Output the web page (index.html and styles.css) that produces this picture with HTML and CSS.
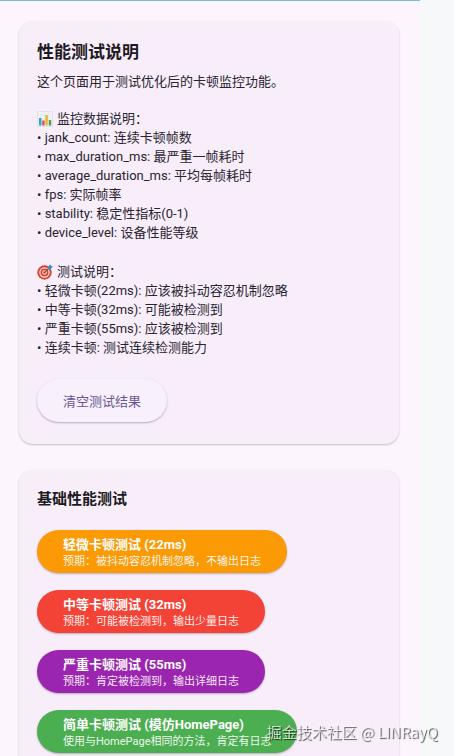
FILE: index.html
```html
<!DOCTYPE html>
<html lang="zh-CN">
<head>
    <meta charset="UTF-8">
    <meta name="viewport" content="width=device-width, initial-scale=1.0">
    <title>性能测试</title>
    <link rel="stylesheet" href="styles.css">
</head>
<body>
    <main class="screen">
        <section class="card">
            <h1 class="card-title">性能测试说明</h1>
            <p class="intro">这个页面用于测试优化后的卡顿监控功能。</p>

            <h2 class="list-title">
                <svg class="icon" viewBox="0 0 16 16" aria-hidden="true">
                    <rect x="0.5" y="0.5" width="15" height="15" fill="#f1f2f3" stroke="#dfe4e8"/>
                    <path d="M1 4.5h14M1 8h14M1 11.5h14M4.5 1v14M8 1v14M11.5 1v14" stroke="#e2e8ec" stroke-width="0.6"/>
                    <rect x="2" y="7" width="2.4" height="7.5" fill="#3c9bd0"/>
                    <rect x="5.2" y="9.5" width="2.4" height="5" fill="#d9534a"/>
                    <rect x="8.4" y="4" width="2.4" height="10.5" fill="#e9b23a"/>
                    <rect x="11.8" y="9" width="2.4" height="5.5" fill="#5a9c48"/>
                </svg>
                监控数据说明：
            </h2>
            <ul class="list">
                <li>jank_count: 连续卡顿帧数</li>
                <li>max_duration_ms: 最严重一帧耗时</li>
                <li>average_duration_ms: 平均每帧耗时</li>
                <li>fps: 实际帧率</li>
                <li>stability: 稳定性指标(0-1)</li>
                <li>device_level: 设备性能等级</li>
            </ul>

            <h2 class="list-title">
                <svg class="icon" viewBox="0 0 16 16" aria-hidden="true">
                    <circle cx="7.5" cy="8.5" r="7.2" fill="#d8432f"/>
                    <circle cx="7.5" cy="8.5" r="5.2" fill="#f3e9e8"/>
                    <circle cx="7.5" cy="8.5" r="4" fill="#d8432f"/>
                    <circle cx="7.5" cy="8.5" r="2.3" fill="#f3e9e8"/>
                    <circle cx="7.5" cy="8.5" r="1.3" fill="#d8432f"/>
                    <path d="M7.5 8.5L12.5 3.5" stroke="#6b4a4a" stroke-width="1"/>
                    <path d="M10.6 3.2l2.7-3 .8 1.8 1.9.6-2.7 2.9-2.6-.1z" fill="#3c8fb5"/>
                </svg>
                测试说明：
            </h2>
            <ul class="list">
                <li>轻微卡顿(22ms): 应该被抖动容忍机制忽略</li>
                <li>中等卡顿(32ms): 可能被检测到</li>
                <li>严重卡顿(55ms): 应该被检测到</li>
                <li>连续卡顿: 测试连续检测能力</li>
            </ul>

            <button type="button" class="btn btn-clear">清空测试结果</button>
        </section>

        <section class="card">
            <h2 class="group-title">基础性能测试</h2>
            <div class="btn-group">
                <button type="button" class="btn orange">
                    <span class="btn-label">轻微卡顿测试 (22ms)</span>
                    <span class="btn-note">预期：被抖动容忍机制忽略，不输出日志</span>
                </button>
                <button type="button" class="btn red">
                    <span class="btn-label">中等卡顿测试 (32ms)</span>
                    <span class="btn-note">预期：可能被检测到，输出少量日志</span>
                </button>
                <button type="button" class="btn purple">
                    <span class="btn-label">严重卡顿测试 (55ms)</span>
                    <span class="btn-note">预期：肯定被检测到，输出详细日志</span>
                </button>
                <button type="button" class="btn green">
                    <span class="btn-label">简单卡顿测试 (模仿HomePage)</span>
                    <span class="btn-note">使用与HomePage相同的方法，肯定有日志</span>
                </button>
            </div>
        </section>
    </main>
    <div class="watermark">掘金技术社区 @ LINRayQ</div>
</body>
</html>
```
FILE: styles.css
```css
* {
    box-sizing: border-box;
}

body {
    margin: 0;
    background-color: #f7f8fa;
    color: #2a2430;
    font-family: Roboto, "Noto Sans CJK SC", sans-serif;
    font-size: 13px;
    line-height: 19px;
}

h1, h2, p, ul {
    margin: 0;
    padding: 0;
}

/* App area, leaves a strip of the page on the right */
.screen {
    display: flex;
    flex-direction: column;
    gap: 26px;
    margin-right: 34px;
    padding: 20px 21px 20px 19px;
    border-top: 1px solid #7bbde2;
    background-color: #fcf5fd;
}

.card {
    padding: 18px;
    border-radius: 14px;
    background-color: #f7eefa;
    box-shadow: 0 1px 2px rgba(60, 40, 70, 0.28);
}

.card-title {
    color: #1d1a22;
    font-size: 17px;
    font-weight: 700;
    line-height: 26px;
}

.intro {
    margin: 7px 0 18px;
}

.list-title {
    display: flex;
    align-items: center;
    gap: 4px;
    font-size: 13px;
    font-weight: 400;
}

.icon {
    width: 16px;
    height: 16px;
}

.list {
    margin-bottom: 20px;
    list-style: none;
}

.list li::before {
    content: "• ";
}

.btn {
    display: block;
    padding: 5px 26px 3px;
    border: none;
    border-radius: 22px;
    color: #fff;
    font-family: inherit;
    text-align: left;
    box-shadow: 0 1px 2px rgba(40, 20, 50, 0.3);
    cursor: pointer;
}

.btn-clear {
    margin: 22px 0 4px;
    padding: 13px 26px 11px;
    background-color: #f8f0fb;
    color: #6a5896;
    font-size: 13px;
    line-height: 19px;
}

.group-title {
    margin-bottom: 19px;
    color: #1d1a22;
    font-size: 15px;
    font-weight: 700;
    line-height: 23px;
}

.btn-group {
    display: flex;
    flex-direction: column;
    align-items: flex-start;
    gap: 17px;
}

.btn-label,
.btn-note {
    display: block;
}

.btn-label {
    font-size: 13px;
    font-weight: 700;
    line-height: 19px;
}

.btn-note {
    font-size: 11px;
    line-height: 16px;
    opacity: 0.9;
}

.orange {
    background-color: #fb9a05;
}

.red {
    background-color: #f34336;
}

.purple {
    background-color: #9b25ae;
}

.green {
    background-color: #4bae50;
}

.watermark {
    position: fixed;
    right: 16px;
    bottom: 12px;
    color: rgba(255, 255, 255, 0.7);
    font-family: "Noto Sans CJK SC", sans-serif;
    font-size: 15px;
    line-height: 24px;
    text-shadow: 1px 1px 1px rgba(0, 0, 0, 0.65);
    pointer-events: none;
}
```
